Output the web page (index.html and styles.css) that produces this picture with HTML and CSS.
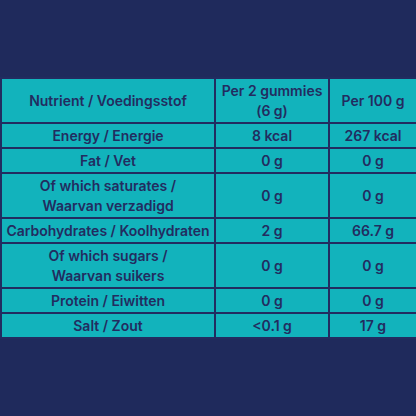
FILE: index.html
```html
<!DOCTYPE html>
<html lang="en">
<head>
    <meta charset="UTF-8">
    <title>Nutrition table</title>
    <link rel="stylesheet" href="styles.css">
</head>
<body>
<div class="tableWrap">
    <table class="nutrition">
        <colgroup>
            <col class="colName">
            <col class="colServing">
            <col class="colHundred">
        </colgroup>
        <tr class="double">
            <td>Nutrient / Voedingsstof</td>
            <td>Per 2 gummies<br>(6 g)</td>
            <td>Per 100 g</td>
        </tr>
        <tr>
            <td>Energy / Energie</td>
            <td>8 kcal</td>
            <td>267 kcal</td>
        </tr>
        <tr>
            <td>Fat / Vet</td>
            <td>0 g</td>
            <td>0 g</td>
        </tr>
        <tr class="double">
            <td>Of which saturates /<br>Waarvan verzadigd</td>
            <td>0 g</td>
            <td>0 g</td>
        </tr>
        <tr>
            <td>Carbohydrates / Koolhydraten</td>
            <td>2 g</td>
            <td>66.7 g</td>
        </tr>
        <tr class="double">
            <td>Of which sugars /<br>Waarvan suikers</td>
            <td>0 g</td>
            <td>0 g</td>
        </tr>
        <tr>
            <td>Protein / Eiwitten</td>
            <td>0 g</td>
            <td>0 g</td>
        </tr>
        <tr>
            <td>Salt / Zout</td>
            <td>&lt;0.1 g</td>
            <td>17 g</td>
        </tr>
    </table>
</div>
</body>
</html>
```

FILE: styles.css
```css
* {
    box-sizing: border-box;
}

body {
    margin: 0;
    background-color: #1f2a5c;
    font-family: Inter, "Noto Sans", sans-serif;
    color: #222c60;
}

.tableWrap {
    padding-top: 77px;
}

.nutrition {
    width: 416px;
    border-collapse: collapse;
    table-layout: fixed;
}

.colName {
    width: 214px;
}

.colServing {
    width: 114px;
}

.colHundred {
    width: 88px;
}

.nutrition td {
    background-color: #12b3bc;
    border: 2px solid #222c60;
    text-align: center;
    vertical-align: middle;
    font-size: 14px;
    font-weight: 600;
    line-height: 20px;
    padding: 1.5px 2px;
    white-space: nowrap;
}
```
